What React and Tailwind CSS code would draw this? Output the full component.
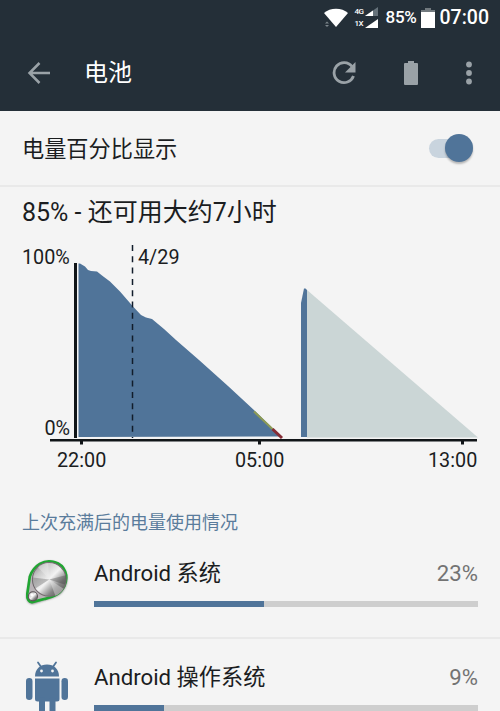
import React, { useState } from "react";

const usage = [
  { name: "Android 系统", percent: 23, fill: 44.2, Icon: DiscIcon },
  { name: "Android 操作系统", percent: 9, fill: 18.2, Icon: AndroidIcon },
];

function StatusBar() {
  return (
    <div className="flex h-9 items-center justify-end pr-[11px] text-white">
      <svg className="h-[22px] w-7" viewBox="0 0 28 22">
        <path d="M2 6C8 .2 20 .2 26 6L14 20z" fill="#fff" />
        <path d="M3 16.500l2-2 2 2zM3 18l2 2 2-2z" fill="#7d868b" />
      </svg>
      <div className="ml-[5px] flex w-[9px] flex-col text-[8px] leading-[12px] font-medium tracking-[-0.5px]">
        <span>4G</span>
        <span>1X</span>
      </div>
      <svg className="ml-px h-[22px] w-[13px]" viewBox="0 0 13 22">
        <path d="M0 9L13 0V9z" fill="#66727a" />
        <path d="M0 9L8 3.500V9z" fill="#fff" />
        <path d="M0 21L13 12V21z" fill="#fff" />
      </svg>
      <span className="ml-2 text-[17px] font-medium tracking-[-0.3px]">85%</span>
      <svg className="ml-1 h-5 w-[14px]" viewBox="0 0 14 20">
        <path d="M4 0h6v2h4v3H0V2h4z" fill="#71797e" />
        <path d="M0 4h14v16H0z" fill="#fff" />
      </svg>
      <span className="ml-[5px] text-[19.500px] font-medium">07:00</span>
    </div>
  );
}

function AppBar() {
  return (
    <div className="flex h-[75px] items-center pb-[2px] pl-[27px] text-[#9aa2a7]">
      <svg className="h-6 w-6" viewBox="0 0 24 24" fill="none" stroke="currentColor" strokeWidth="2.5">
        <path d="M23 12H3M12.500 2L2.500 12l10 10" />
      </svg>
      <h1 className="ml-[33px] flex-1 pt-px text-[24px] text-white">电池</h1>
      <svg className="h-6 w-6" viewBox="0 0 24 24" fill="none" stroke="currentColor" strokeWidth="2.8">
        <path d="M20 5.500A10 10 0 1 0 21.500 15" />
        <path d="M23.500 1v10.500H13z" fill="currentColor" stroke="none" />
      </svg>
      <svg className="ml-[48px] h-6 w-[14px]" viewBox="0 0 14 24" fill="currentColor">
        <path d="M4 0h6v2h3q1 0 1 1v20q0 1-1 1H1q-1 0-1-1V3q0-1 1-1h3z" />
      </svg>
      <svg className="mr-[28px] ml-[48px] h-6 w-[6px]" viewBox="0 0 6 24" fill="currentColor">
        <circle cx="3" cy="3.500" r="2.900" />
        <circle cx="3" cy="12" r="2.900" />
        <circle cx="3" cy="20.500" r="2.900" />
      </svg>
    </div>
  );
}

function Toggle({ on, onChange }) {
  return (
    <button
      type="button"
      role="switch"
      aria-checked={on}
      aria-label="电量百分比显示"
      onClick={() => onChange(!on)}
      className={
        "flex h-[19px] w-11 items-center rounded-full " +
        (on ? "justify-end bg-[#c9d4de]" : "justify-start bg-[#c4c4c4]")
      }
    >
      <span className={"h-7 w-7 shrink-0 rounded-full shadow-[0_2px_2px_rgba(0,0,0,0.25)] " + (on ? "bg-[#507499]" : "bg-[#fafafa]")} />
    </button>
  );
}

function BatteryChart() {
  return (
    <svg className="block h-[236px] w-[500px]" viewBox="0 236 500 236" fontSize="19.8" fill="#1b1d1f">
      {/* history */}
      <path
        d="M78.500 437V263.500h1.500l5 3 3 3.500 3 1 6 .5 5 4 8 6 10 10 13 15 8 8.500 5 2.500 6 1.500 12 10 12 11 23 20 29 26 27 25 26 25.500z"
        fill="#507499"
      />
      <path d="M254 411.500L273 429.500" stroke="#8d9b55" strokeWidth="2" />
      <path d="M272.500 429L282 438" stroke="#852c35" strokeWidth="3" />
      <path d="M301 437V303L304 288.500H305.500L307 290V437z" fill="#507499" />

      {/* projection */}
      <path d="M307 290L478 437.500H307z" fill="#cbd6d6" />

      <path d="M132.500 245V438" stroke="#111c2b" strokeWidth="1.500" strokeDasharray="6 5.300" />
      <path d="M74 263h3v175h-3z" fill="#111518" />
      <path d="M50 439h427v2.500H50zM80 441h3v3.500h-3zM258 441h3v3.500h-3zM461 441h3v3.500h-3z" fill="#111518" />

      <text x="22" y="263.500">100%</text>
      <text x="138" y="263.500">4/29</text>
      <text x="70" y="435" textAnchor="end">0%</text>
      <text x="57" y="467">22:00</text>
      <text x="235" y="467">05:00</text>
      <text x="428" y="467">13:00</text>
    </svg>
  );
}

function DiscIcon() {
  return (
    <svg className="h-[50px] w-[50px]" viewBox="-0.7 0 49 49">
      <defs>
        <linearGradient id="metal" x1="0" y1="0" x2="1" y2="1">
          <stop offset="0" stopColor="#777" />
          <stop offset="0.25" stopColor="#c9c9c9" />
          <stop offset="0.5" stopColor="#f3f3f3" />
          <stop offset="0.72" stopColor="#858585" />
          <stop offset="1" stopColor="#4d4848" />
        </linearGradient>
        <filter id="soft" x="-20%" y="-20%" width="140%" height="140%">
          <feGaussianBlur stdDeviation="0.9" />
        </filter>
      </defs>
      <path d="M7 19C11 8 21 2 31 5C42 8 46 20 42 29C38 38 31 40 23 42L10 46C5 46 3 41 4 36z" fill="#777" filter="url(#soft)" />
      <path
        d="M7 19C11 8 21 2 31 5C42 8 45 19 41 28C37 36 31 39 22 41L10 44C6 45 4 41 4.500 36z"
        fill="#b9b4b7"
        stroke="#20a632"
        strokeWidth="2.600"
      />
      <circle cx="26" cy="22" r="16.500" fill="url(#metal)" stroke="#756b70" strokeWidth="1" />
      <path d="M26 22L15 10Q20 6 25 6z" fill="#eee" opacity="0.45" />
      <path d="M26 22L32 38Q37 36 40 31z" fill="#eee" opacity="0.4" />
      <path d="M26 22L10 20Q9 26 12 31z" fill="#444" opacity="0.3" />
      <path d="M26 22L42 18Q43 24 41 27z" fill="#333" opacity="0.3" />
      <circle cx="10" cy="38.500" r="4.500" fill="url(#metal)" stroke="#5b5357" strokeWidth="1" />
      <circle cx="9" cy="37" r="1.500" fill="#fff" />
    </svg>
  );
}

function AndroidIcon() {
  return (
    <svg className="h-[52px] w-[42px]" viewBox="0 0 42 52" fill="#507499">
      <path d="M12 1.500l3.500 5M30 1.500l-3.500 5" stroke="#507499" strokeWidth="1.800" strokeLinecap="round" />
      <path d="M9 15.500C9 8 14 3.500 21 3.500S33 8 33 15.500z" />
      <circle cx="15.500" cy="10" r="1.400" fill="#f4f4f4" />
      <circle cx="26.500" cy="10" r="1.400" fill="#f4f4f4" />
      <rect x="0" y="17" width="6.500" height="22" rx="3.200" />
      <rect x="35.500" y="17" width="6.500" height="22" rx="3.200" />
      <path d="M9 17.500h24.500V38q0 2.500-2.500 2.500H11.500Q9 40.500 9 38z" />
      <rect x="13" y="36" width="6" height="16" rx="3" />
      <rect x="23.500" y="36" width="6" height="16" rx="3" />
    </svg>
  );
}

function UsageRow({ name, percent, fill, Icon }) {
  return (
    <li className="flex h-[104px] border-b-2 border-[#e9e9e9] pr-[22px]">
      <div className="flex w-[94px] shrink-0 justify-center pt-[22px]">
        <Icon />
      </div>
      <div className="flex-1 pt-[22px]">
        <div className="flex h-8 items-center justify-between text-[22.200px] leading-8">
          <span>{name}</span>
          <span className="text-[#737373]">{percent}%</span>
        </div>
        <div className="mt-[12px] h-[6px] bg-[#cecece]">
          <div className="h-full bg-[#507499]" style={{ width: `${fill}%` }} />
        </div>
      </div>
    </li>
  );
}

export default function App() {
  const [showPercent, setShowPercent] = useState(true);

  return (
    <div className="h-[711px] w-[500px] overflow-hidden bg-[#f4f4f4] font-['Roboto','Noto_Sans_CJK_SC',sans-serif] text-[#1b1d1f]">
      <header className="bg-[#242f38]">
        <StatusBar />
        <AppBar />
      </header>

      <div className="flex h-[76px] items-center justify-between border-b-2 border-[#e9e9e9] pr-[27px] pl-[22px]">
        <span className="pt-[3px] text-[22.200px]">电量百分比显示</span>
        <Toggle on={showPercent} onChange={setShowPercent} />
      </div>

      <section className="h-[316px]">
        <h2 className="h-[49px] pl-[22px] text-[25px] leading-[51px]">85% - 还可用大约7小时</h2>
        <BatteryChart />
      </section>

      <h3 className="h-8 pl-[22px] text-[18px] leading-[40px] text-[#5a7c9c]">上次充满后的电量使用情况</h3>
      <ul>
        {usage.map((item) => (
          <UsageRow key={item.name} {...item} />
        ))}
      </ul>
    </div>
  );
}
